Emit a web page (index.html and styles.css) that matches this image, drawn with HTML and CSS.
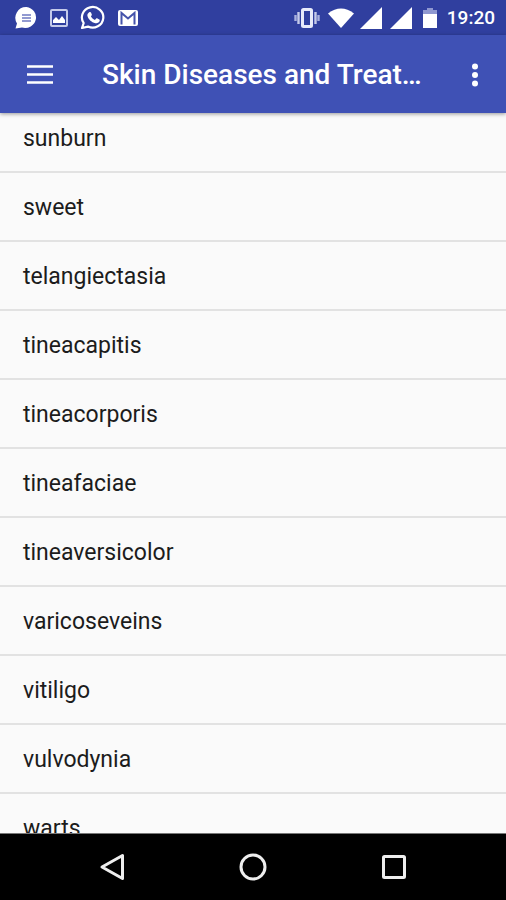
FILE: index.html
```html
<!DOCTYPE html>
<html lang="en">
<head>
<meta charset="utf-8">
<meta name="viewport" content="width=device-width, initial-scale=1">
<title>Skin Diseases and Treatments</title>
<link rel="stylesheet" href="styles.css">
</head>
<body>
<div class="status">
  <div class="status-group notifications">
    <svg width="24" height="24" viewBox="0 0 24 24"><path fill="#fff" d="M12.500 1A11 10.500 0 1 1 8 21.500L1.500 22.500L3 17.500A10.800 10.800 0 0 1 12.500 1Z"/><path stroke="#6f7ac2" stroke-width="1.500" d="M8 9h9M8 12h9M8 15h9"/></svg>
    <svg width="20" height="20" viewBox="0 0 20 20"><rect x="2" y="2" width="16" height="16" rx="1" fill="none" stroke="#c5cbea" stroke-width="2"/><path fill="#fff" d="M4 15V12l3-3 3 3 3-4 3 4v3z"/></svg>
    <svg width="26" height="26" viewBox="0 0 26 26"><path fill="none" stroke="#fff" stroke-width="2.200" stroke-linejoin="round" d="M2 23l1.700-5A10.700 10.300 0 1 1 8 21.600Z"/><path fill="#fff" d="M9.200 7.200c.6-.5 1.500-.4 1.800.3l.8 1.900c.2.600-.1 1-.9 1.900.9 1.800 2.100 2.900 4 3.800l1.300-1.500c.4-.4.8-.3 1.300 0l1.800 1c.6.300.5.800.3 1.500-.5 1.600-2.300 2.500-4.200 2.100-4-.9-7.300-4.200-8-7.500-.3-1.500.7-2.800 1.800-3.500z"/></svg>
    <svg width="22" height="18" viewBox="0 0 22 18"><rect x="1" y="1" width="20" height="16" rx="2" fill="#fff"/><path fill="none" stroke="#4453ab" stroke-width="2" d="M4.500 15.500V4L11 9.500L17.500 4v11.500"/></svg>
  </div>
  <div class="status-group system">
    <svg width="26" height="22" viewBox="0 0 26 22"><rect x="8.500" y="2.500" width="9" height="17" rx="1" fill="none" stroke="#e7eafa" stroke-width="3"/><path stroke="#c5cbea" stroke-width="2.400" d="M4.500 5v12M21.500 5v12"/><path stroke="#a9b1de" stroke-width="2.400" d="M1.500 8v6M24.500 8v6"/></svg>
    <svg width="26" height="20" viewBox="0 0 26 20"><path fill="#fff" d="M0 5.500Q13-4.500 26 5.500L13 20Z"/></svg>
    <svg class="signal" width="22" height="22" viewBox="0 0 22 22"><path fill="#fff" d="M22 0v22H0z"/></svg>
    <svg class="signal" width="22" height="22" viewBox="0 0 22 22"><path fill="#fff" d="M22 0v22H0z"/></svg>
    <svg class="battery" width="14" height="20" viewBox="0 0 14 20"><path fill="#8f98d0" d="M4 0h6v2h4v5H0V2h4z"/><path fill="#fff" d="M0 6h14v14H0z"/></svg>
    <time>19:20</time>
  </div>
</div>
<header class="appbar">
  <button class="icon-button" aria-label="Open menu">
    <svg width="28" height="22" viewBox="0 0 28 22"><path stroke="#fff" stroke-width="2.500" d="M1 2.500h26M1 10.500h26M1 18.500h26"/></svg>
  </button>
  <h1>Skin Diseases and Treatments</h1>
  <button class="icon-button more" aria-label="More options">
    <svg width="8" height="24" viewBox="0 0 8 24"><g fill="#fff"><circle cx="4" cy="3.500" r="3"/><circle cx="4" cy="12" r="3"/><circle cx="4" cy="20.500" r="3"/></g></svg>
  </button>
</header>
<main>
  <ul class="list">
    <li>sunburn</li>
    <li>sweet</li>
    <li>telangiectasia</li>
    <li>tineacapitis</li>
    <li>tineacorporis</li>
    <li>tineafaciae</li>
    <li>tineaversicolor</li>
    <li>varicoseveins</li>
    <li>vitiligo</li>
    <li>vulvodynia</li>
    <li>warts</li>
  </ul>
</main>
<nav class="navbar">
  <button aria-label="Back"><svg width="28" height="28" viewBox="0 0 28 28"><path fill="none" stroke="#eee" stroke-width="3" stroke-linejoin="round" d="M24.500 2.500v23L4 14z"/></svg></button>
  <button aria-label="Home"><svg width="28" height="28" viewBox="0 0 28 28"><circle cx="14" cy="14" r="12" fill="none" stroke="#eee" stroke-width="3"/></svg></button>
  <button aria-label="Recent apps"><svg width="28" height="28" viewBox="0 0 28 28"><rect x="3.500" y="3.500" width="21" height="21" rx="1" fill="none" stroke="#eee" stroke-width="3"/></svg></button>
</nav>
</body>
</html>
```
FILE: styles.css
```css
* {
  box-sizing: border-box;
}

body {
  margin: 0;
  height: 100vh;
  display: flex;
  flex-direction: column;
  background: #fafafa;
  color: #1c1c1c;
  font-family: Roboto, "Liberation Sans", sans-serif;
}

svg {
  display: block;
  flex: none;
}

button {
  display: flex;
  align-items: center;
  justify-content: center;
  padding: 0;
  border: 0;
  background: none;
}

.status {
  flex: none;
  height: 35px;
  display: flex;
  align-items: center;
  justify-content: space-between;
  padding: 0 11px 0 14px;
  background: #303f9f;
  color: #fff;
}

.status-group {
  display: flex;
  align-items: center;
}

.notifications {
  gap: 11px;
}

.system {
  gap: 8px;
}

.signal {
  margin-left: -2px;
}

.signal + .signal {
  margin-left: 0;
}

.battery {
  margin: 0 2px 0 3px;
}

time {
  font-size: 19px;
  font-weight: 500;
  line-height: 24px;
}

.appbar {
  position: relative;
  flex: none;
  height: 78px;
  display: flex;
  align-items: center;
  padding: 2px 0 0;
  background: #3f51b5;
  color: #fff;
  box-shadow: 0 1px 4px rgba(0, 0, 0, 0.4);
}

.icon-button {
  flex: none;
  width: 80px;
  height: 64px;
}

.more {
  width: 62px;
}

h1 {
  flex: 1;
  min-width: 0;
  margin: 0 12px 0 22px;
  overflow: hidden;
  white-space: nowrap;
  text-overflow: ellipsis;
  font-size: 28px;
  font-weight: 500;
  line-height: 36px;
}

main {
  flex: 1;
  min-height: 0;
  overflow: hidden;
}

.list {
  margin: -9px 0 0;
  padding: 0;
  list-style: none;
}

.list li {
  height: 69px;
  padding: 1px 23px 0;
  border-bottom: 2px solid #e2e2e2;
  font-size: 23px;
  line-height: 68px;
}

.navbar {
  flex: none;
  height: 67px;
  display: flex;
  justify-content: center;
  gap: 85px;
  border-top: 1px solid #777;
  background: #000;
}

.navbar button {
  width: 56px;
}
```
